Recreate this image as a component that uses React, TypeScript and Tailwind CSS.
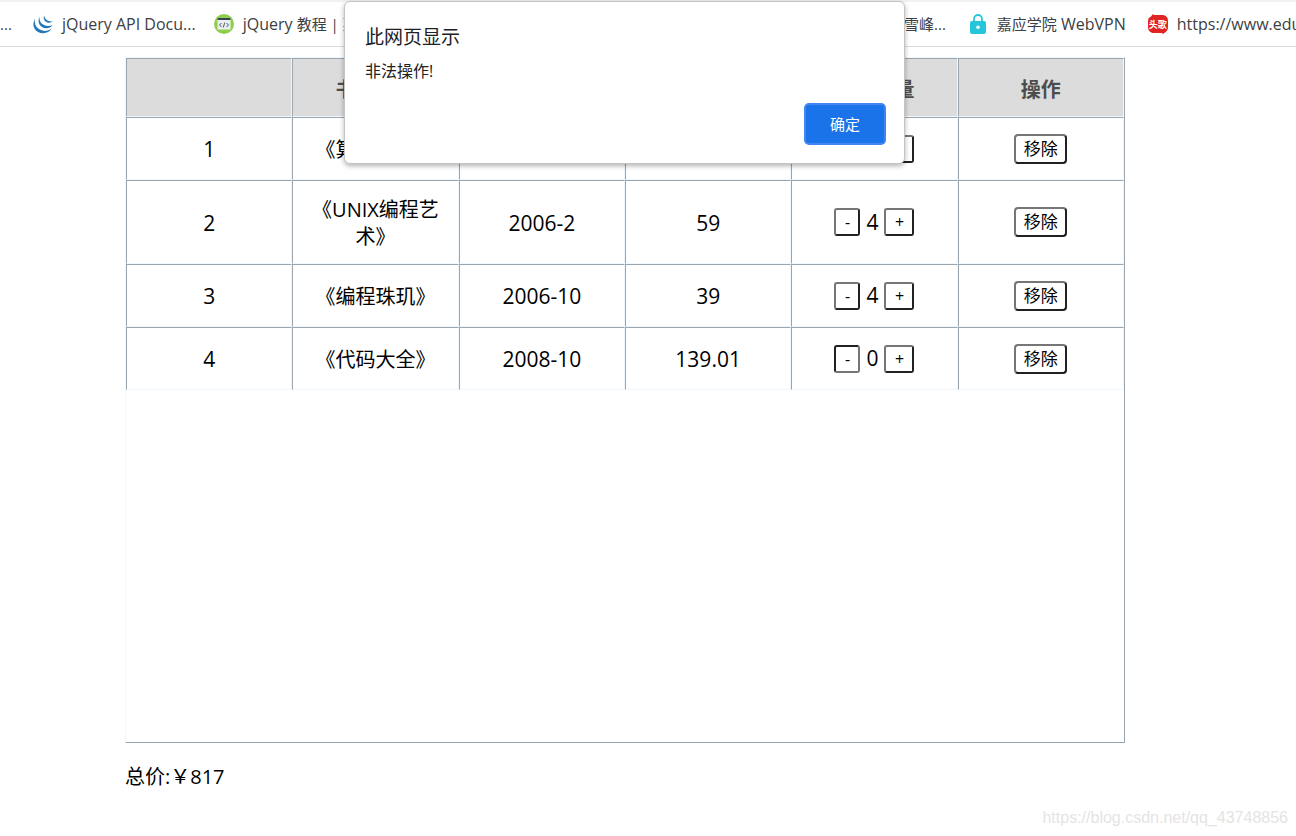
import React from 'react';

interface Book {
  id: number;
  name: string;
  date: string;
  price: number;
  count: number;
}

const books: Book[] = [
  { id: 1, name: '《算法导论》', date: '2006-9', price: 85, count: 1 },
  { id: 2, name: '《UNIX编程艺术》', date: '2006-2', price: 59, count: 4 },
  { id: 3, name: '《编程珠玑》', date: '2006-10', price: 39, count: 4 },
  { id: 4, name: '《代码大全》', date: '2008-10', price: 139.01, count: 0 },
];

const headers = ['', '书籍名称', '出版日期', '价格', '购买数量', '操作'];

const JQueryIcon = () => (
  <svg className="size-5 shrink-0" viewBox="0 0 20 20" fill="#2277b8">
    <path d="M2.2 4.4C-1 9.500.2 15.500 5 18c5 2.400 11 1.200 13.800-3.400-3.600 2.600-8 3-11.600 1.200C2.800 13.600.8 9.200 2.200 4.400z" />
    <path d="M6.600 2.600c-2 3.800-1 8.200 2.400 10.400 3.600 2.200 8 1.500 10.600-2-2.800 1.400-6 1.500-8.600.1C7.500 9.400 5.900 6.200 6.600 2.600z" />
    <path d="M11.200 1.200c-1.100 2.600-.3 5.500 2 6.900 2.200 1.300 4.800.9 6.500-1-1.800.5-3.700.4-5.200-.5-2.100-1.200-3.300-3.200-3.300-5.400z" />
  </svg>
);

const RunoobIcon = () => (
  <svg className="size-5 shrink-0" viewBox="0 0 20 20">
    <circle cx="10" cy="10" r="10" fill="#8fce4f" />
    <rect x="3.500" y="4" width="13" height="11.500" fill="#eceff1" />
    <rect x="3.500" y="4" width="13" height="2" fill="#37474f" />
    <path d="M7.500 9l-2 2 2 2M12.500 9l2 2-2 2M10.700 8.600l-1.400 4.800" fill="none" stroke="#455a64" strokeWidth="1" />
  </svg>
);

const LockIcon = () => (
  <svg className="size-5 shrink-0" viewBox="0 0 20 20">
    <path d="M6 8V5a4 4 0 0 1 8 0v3" fill="none" stroke="#26c6da" strokeWidth="1.800" />
    <rect x="2" y="7" width="16" height="13" rx="2" fill="#26c6da" />
    <circle cx="10" cy="13.300" r="1.800" fill="#fff" />
  </svg>
);

const TougeIcon = () => (
  <span className="relative flex size-5 shrink-0 items-center justify-center text-[9px] leading-none font-bold text-white">
    <svg className="absolute inset-0 size-5" viewBox="0 0 20 20" fill="#e02424">
      <path d="M3 2.500L5 0l1 1h8c4 0 6 2.500 6 6v6c0 2.500-1 4.500-3 5.500L15 20l-1-1H6c-4 0-6-2.500-6-6V7c0-2 1-3.600 3-4.500z" />
    </svg>
    <span className="relative">头歌</span>
  </span>
);

const bookmark = 'flex items-center gap-[9px]';

const BookmarkBar = () => (
  <nav className="flex h-[47px] items-center justify-between overflow-hidden border-t-2 border-b border-t-[#f1f1f1] border-b-[#dadce0] text-base whitespace-nowrap text-[#3c4043]">
    <div className="flex items-center gap-[18px]">
      <a href="#" className="w-[15px] text-[15px]">...</a>
      <a href="#" className={bookmark}><JQueryIcon />jQuery API Docu...</a>
      <a href="#" className={bookmark}>
        <RunoobIcon />
        <span>jQuery <span className="text-[15px]">教程 | 菜鸟...</span></span>
      </a>
    </div>
    <div className="flex w-[392px] shrink-0 items-center gap-[22px]">
      <a href="#" className="text-[15px]">雪峰...</a>
      <a href="#" className={bookmark}>
        <LockIcon />
        <span><span className="text-[15px]">嘉应学院</span> WebVPN</span>
      </a>
      <a href="#" className={bookmark}><TougeIcon />https://www.edu</a>
    </div>
  </nav>
);

const cell = 'border border-t-[#9aa5ae] border-l-[#9aa5ae] border-r-[#f0f8ff] border-b-[#f0f8ff] px-4';
const button = 'border-2 border-t-[#767676] border-l-[#767676] border-r-[#212121] border-b-[#212121] bg-white';

const BookTable = () => (
  <div className="min-h-[686px] border border-t-[#f0f8ff] border-l-[#f0f8ff] border-r-[#9aa5ae] border-b-[#9aa5ae]">
    <table className="w-full table-fixed border-separate border-spacing-0 text-center text-xl leading-[27px]">
      <thead>
        <tr className="h-[59px] bg-[#dcdcdc] text-[#4c4c4c]">
          {headers.map((title, idx) => (
            <th key={idx} className={`${cell} pt-[3px]`}>{title}</th>
          ))}
        </tr>
      </thead>
      <tbody>
        {books.map((book) => (
          <tr key={book.id} className="h-[63px]">
            <td className={`${cell} pt-[2px] text-[21px]`}>{book.id}</td>
            <td className={`${cell} pt-[15px] pb-[13px]`}>{book.name}</td>
            <td className={`${cell} pt-[2px] text-[21px]`}>{book.date}</td>
            <td className={`${cell} pt-[2px] text-[21px]`}>{book.price}</td>
            <td className={cell}>
              <div className="flex items-center justify-center gap-[6px] text-[21px]">
                <button
                  aria-label="减少"
                  className={
                    book.count === 0
                      ? 'h-7 w-[26px] rounded-[3px] border-2 border-t-[#212121] border-l-[#212121] border-r-[#767676] border-b-[#767676] bg-white text-base leading-6'
                      : `${button} h-7 w-[26px] rounded-[3px] text-base leading-6`
                  }
                >
                  -
                </button>
                <span>{book.count}</span>
                <button aria-label="增加" className={`${button} h-7 w-[30px] rounded-[3px] text-base leading-6`}>+</button>
              </div>
            </td>
            <td className={cell}>
              <button className={`${button} block mx-auto h-[30px] w-[53px] rounded-[4px] text-[17px] leading-[26px]`}>移除</button>
            </td>
          </tr>
        ))}
      </tbody>
    </table>
  </div>
);

// 浏览器弹出的 alert
const AlertDialog = () => (
  <div
    role="alertdialog"
    aria-labelledby="alert-title"
    className="absolute top-px left-[344px] flex h-[163px] w-[561px] flex-col rounded-md border border-[#c4c4c4] bg-white px-5 text-[#202124] shadow-[0_2px_5px_rgba(0,0,0,0.3)]"
  >
    <h1 id="alert-title" className="mt-[22px] text-[19px] leading-[26px]">此网页显示</h1>
    <p className="mt-[9px] text-base leading-6">非法操作!</p>
    <button className="mt-5 mr-[-2px] h-[42px] w-[82px] self-end rounded-[5px] border-2 border-[#4285f4] bg-[#1a73e8] text-[15px] text-white">
      确定
    </button>
  </div>
);

export default function App() {
  return (
    <div className="relative min-h-screen overflow-hidden bg-white font-['Open_Sans','Noto_Sans_CJK_SC',sans-serif] text-black">
      <BookmarkBar />
      <main className="mt-[10px] ml-[125px] max-w-[1000px]">
        <BookTable />
        <p className="mt-5 text-xl leading-[27px]">总价:￥817</p>
      </main>
      <AlertDialog />
      <span className="absolute right-2 bottom-2 font-['Liberation_Sans',sans-serif] text-base leading-5 text-[#e4e4e4]">
        https://blog.csdn.net/qq_43748856
      </span>
    </div>
  );
}
